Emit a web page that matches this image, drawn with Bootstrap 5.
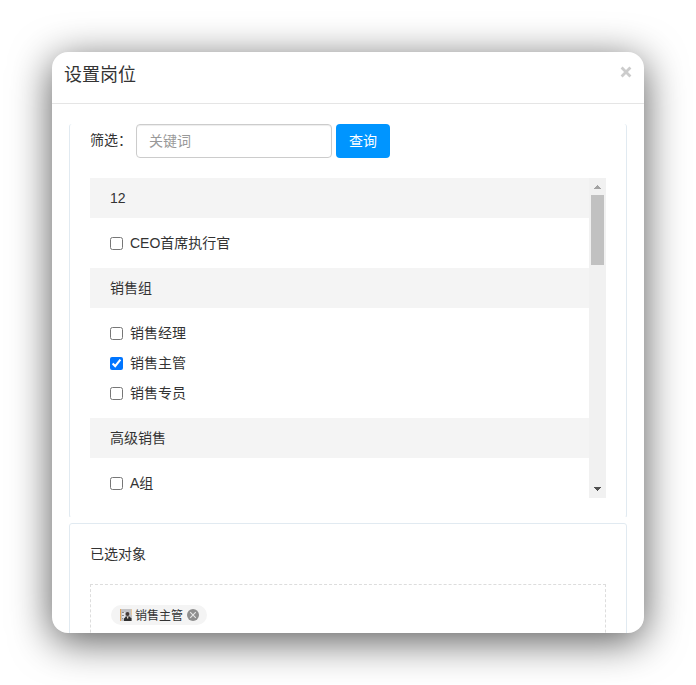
<!DOCTYPE html>
<html lang="zh-CN">
<head>
<meta charset="utf-8">
<meta name="viewport" content="width=device-width, initial-scale=1">
<title>设置岗位</title>
<link rel="stylesheet" href="https://cdn.jsdelivr.net/npm/bootstrap@5.3.0/dist/css/bootstrap.min.css">
<style>
body{font:14px/20px "Liberation Sans","Noto Sans CJK SC",sans-serif;color:#333;background:#fff;padding:52px;min-height:100vh}
.dialog{width:592px;height:581px;border-radius:16px;box-shadow:0 8px 40px rgba(0,0,0,.66)}
.dialog-head{height:52px;padding:0 12px;border-bottom:1px solid #e5e5e5}
.dialog-title{font-size:18px;line-height:46px;font-weight:400}
.dialog-close{width:12px;height:12px;margin-top:14px;color:#ccc}
.panel{width:558px;margin-left:17px;border:1px solid #e1eaf1;border-radius:3px}
.panel-filter{height:394px;border-top:0;border-bottom-color:transparent;margin-top:20px;padding:0 20px;clip-path:inset(0 0 1px 0)}
.panel-chosen{height:200px;margin-top:5px;padding:20px}
.filter-label{width:46px;line-height:32px}
.keyword{width:196px;height:34px;padding:0 12px;font-size:14px;border:1px solid #ccc;border-radius:4px;box-shadow:inset 0 1px 1px rgba(0,0,0,.075)}
.keyword::placeholder{color:#999}
.query{width:54px;height:34px;margin-left:4px;padding:0;font-size:14px;border:0;border-radius:4px;background:#0095ff;color:#fff}
.roles{height:320px;margin-top:20px}
.group-name{height:40px;line-height:40px;padding-left:20px;background:#f4f4f4}
.group-items{padding:10px 20px}
.role{height:30px;gap:7px}
.role input{width:13px;height:13px;margin:1px 0 0}
.track{width:17px;background:#f1f1f1;padding:7px 0 5px}
.track svg{display:block}
.thumb{width:13px;height:70px;background:#c1c1c1;margin-top:5px}
.chosen-box{margin-top:20px;height:150px;padding:20px;border:1px dashed #ddd}
.chip{height:20px;width:96px;padding:0 8px 0 9px;border-radius:10px;background:#f4f4f4;font-size:12px}
.chip-name{margin-left:3px;padding-top:1px}
.chip-remove{margin-bottom:1px}
</style>
<script src="https://cdn.jsdelivr.net/npm/bootstrap@5.3.0/dist/js/bootstrap.bundle.min.js"></script>
</head>
<body class="overflow-hidden">
<div class="dialog bg-white overflow-hidden">
  <div class="dialog-head d-flex justify-content-between">
    <h1 class="dialog-title m-0">设置岗位</h1>
    <button class="dialog-close btn border-0 p-0 d-flex" aria-label="关闭"><svg width="12" height="12" viewBox="0 0 12 12" stroke="currentColor" stroke-width="2.8"><path d="M1.6 1.6 10.4 10.4M10.4 1.6 1.6 10.4"/></svg></button>
  </div>
  <div class="panel panel-filter">
    <div class="d-flex">
      <label class="filter-label" for="kw">筛选：</label>
      <input id="kw" class="keyword" type="text" placeholder="关键词">
      <button class="query btn">查询</button>
    </div>
    <div class="roles d-flex overflow-hidden">
      <div class="flex-grow-1">
        <div class="group-name">12</div>
        <div class="group-items">
          <label class="role d-flex align-items-center"><input type="checkbox">CEO首席执行官</label>
        </div>
        <div class="group-name">销售组</div>
        <div class="group-items">
          <label class="role d-flex align-items-center"><input type="checkbox">销售经理</label>
          <label class="role d-flex align-items-center"><input type="checkbox" checked>销售主管</label>
          <label class="role d-flex align-items-center"><input type="checkbox">销售专员</label>
        </div>
        <div class="group-name">高级销售</div>
        <div class="group-items">
          <label class="role d-flex align-items-center"><input type="checkbox">A组</label>
        </div>
      </div>
      <div class="track d-flex flex-column align-items-center">
        <svg width="7" height="5" fill="#a3a3a3" shape-rendering="crispEdges"><path d="M3 0h1v1h1v1h1v1h1v1H0V3h1V2h1V1h1z"/></svg>
        <div class="thumb"></div>
        <svg class="mt-auto" width="7" height="6" fill="#505050" shape-rendering="crispEdges"><path d="M0 0h7v1H6v1H5v1H4v1H3V3H2V2H1V1H0z"/></svg>
      </div>
    </div>
  </div>
  <div class="panel panel-chosen">
    <div>已选对象</div>
    <div class="chosen-box">
      <div class="chip d-flex align-items-center">
        <svg width="12" height="12" viewBox="0 0 12 12"><path fill="#c3c3c6" d="M0 0h12v12H0z"/><path stroke="#e9a95c" d="M.5 0v12"/><path stroke="#e8c9a0" d="M11.5 0v6"/><path fill="#e4e6ea" d="M2 3h3v7H2z"/><path stroke="#8c8c8c" d="M2 3.5h2M2 6.5h2M2 9.5h1"/><circle cx="7.5" cy="5" r="1.9" fill="#443a37"/><path fill="#303030" d="M4 12V9.500l2-2h3.500l2 2V12z"/><path fill="#e5d6c8" d="M7 7.500h1.300v2H7z"/></svg>
        <span class="chip-name text-nowrap">销售主管</span>
        <svg class="chip-remove ms-1" width="12" height="12" viewBox="0 0 12 12"><circle cx="6" cy="6" r="6" fill="#8f8f8f"/><path d="m3.2 3.2 5.600 5.600m0-5.600L3.200 8.800" stroke="#e8e8e8" stroke-width="1.1"/></svg>
      </div>
    </div>
  </div>
</div>
</body>
</html>
